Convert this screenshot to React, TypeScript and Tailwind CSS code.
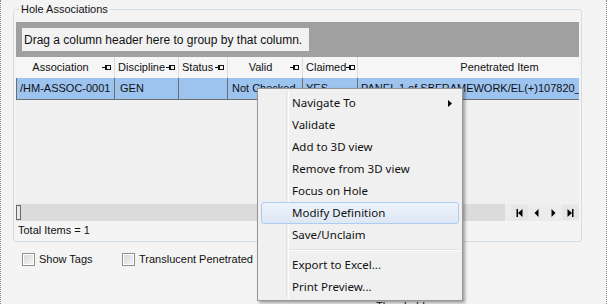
import React from "react";

const grid = "font-['Liberation_Sans',Arial,sans-serif]";
const menuFont = "font-['Noto_Sans','Open_Sans',sans-serif]";

function Pin() {
  return (
    <svg width="9" height="7" viewBox="0 0 9 7" className="shrink-0">
      <path d="M0 3.5h3.5M3.5 1v5" stroke="#111" strokeWidth="1" />
      <rect x="4.5" y="1.5" width="4" height="4" fill="none" stroke="#111" strokeWidth="1" />
    </svg>
  );
}

function NavIcon({ kind }: { kind: "first" | "prev" | "next" | "last" }) {
  return (
    <svg width="7" height="8" viewBox="0 0 7 8">
      {kind === "first" && (
        <>
          <rect x="0.5" y="0" width="1.5" height="8" fill="#000" />
          <path d="M6.5 0v8L2 4z" fill="#000" />
        </>
      )}
      {kind === "prev" && <path d="M5.5 0v8L1.5 4z" fill="#000" />}
      {kind === "next" && <path d="M1.5 0v8l4-4z" fill="#000" />}
      {kind === "last" && (
        <>
          <path d="M0.5 0v8L5 4z" fill="#000" />
          <rect x="5" y="0" width="1.5" height="8" fill="#000" />
        </>
      )}
    </svg>
  );
}

function Checkbox({ label }: { label: string }) {
  return (
    <label className="flex items-center gap-[4px]">
      <span className="h-[13px] w-[13px] border border-[#8e8f8f] bg-white p-[1px]">
        <span className="block h-full w-full bg-gradient-to-br from-[#d8d8d8] to-[#f4f4f4]" />
      </span>
      <span className="text-[11px] leading-[13px] text-[#111]">{label}</span>
    </label>
  );
}

const columns = [
  { title: "Association", w: "w-[99px]", pin: true, center: true, value: "/HM-ASSOC-0001" },
  { title: "Discipline", w: "w-[64px]", pin: true, center: false, value: "GEN" },
  { title: "Status", w: "w-[49px]", pin: true, center: false, value: "" },
  { title: "Valid", w: "w-[75px]", pin: true, center: true, value: "Not Checked" },
  { title: "Claimed", w: "w-[55px]", pin: true, center: false, value: "YES" },
  { title: "Penetrated Item", w: "w-[284px]", pin: false, center: true, value: "PANEL 1 of SBFRAMEWORK/EL(+)107820_PNL" },
];

const menuItems = [
  "Navigate To",
  "Validate",
  "Add to 3D view",
  "Remove from 3D view",
  "Focus on Hole",
  "Modify Definition",
  "Save/Unclaim",
  "-",
  "Export to Excel...",
  "Print Preview...",
];

export default function App() {
  return (
    <div className={`relative h-[304px] w-[607px] overflow-hidden border-x border-dotted border-[#8a8a8a] bg-[#f4f4f4] pl-[12px] pt-[2px] ${grid}`}>
      <fieldset className="w-[569px] rounded-[3px] border border-[#d3dde6] px-[2px] pb-[1px]">
        <legend className="ml-[3px] px-[2px] text-[11px] leading-[14px] text-[#111]">Hole Associations</legend>
        <div className="mt-[6px] w-[563px] overflow-hidden">
          <div className="h-[35px] bg-[#a0a0a0] pl-[6px] pt-[6px]">
            <div className="flex h-[23px] w-[287px] items-center bg-[#f2f2f2] pl-[2px] text-[12px] text-[#111]">
              Drag a column header here to group by that column.
            </div>
          </div>
          <div className="flex h-[21px] w-max bg-[#f6f6f6] text-[11px] text-[#111]">
            {columns.map((c) => (
              <div key={c.title} className={`${c.w} flex shrink-0 items-center border-r border-[#dadada] pr-[3px] pl-[3px]`}>
                <span className={`flex-1 whitespace-nowrap ${c.center ? "text-center" : "text-left"}`}>{c.title}</span>
                {c.pin && <Pin />}
              </div>
            ))}
          </div>
          <div className="flex h-[22px] w-max border-b border-l border-[#6e6e6e] bg-[#9dc3ef] text-[11px] text-[#111]">
            {columns.map((c, i) => (
              <div
                key={c.title}
                className={`${i === 0 ? "w-[98px]" : c.w} flex shrink-0 items-center whitespace-nowrap border-r border-[#6e6e6e] ${i === 3 ? "pl-[4px]" : "pl-[3px]"} ${i === 1 ? "pl-[5px]" : ""}`}
              >
                {c.value}
              </div>
            ))}
          </div>
          <div className="h-[104px] bg-[#f0f0f0]" />
          <div className="flex h-[17px]">
            <div className="flex flex-1 items-center bg-[#dbdbdb]">
              <span className="h-[15px] w-[5px] border border-[#6a6a6a] bg-[#e8e8e8]" />
            </div>
            <div className="flex w-[74px] items-center bg-[#ececec] pl-[6px]">
              <span className="flex h-[15px] w-[17px] items-center justify-center bg-[#e6e6e6]"><NavIcon kind="first" /></span>
              <span className="flex h-[15px] w-[17px] items-center justify-center"><NavIcon kind="prev" /></span>
              <span className="flex h-[15px] w-[17px] items-center justify-center"><NavIcon kind="next" /></span>
              <span className="flex h-[15px] w-[17px] items-center justify-center bg-[#e6e6e6]"><NavIcon kind="last" /></span>
            </div>
          </div>
          <div className="h-[19px] pl-[2px] pt-[3px] text-[11px] leading-[13px] text-[#111]">Total Items = 1</div>
        </div>
      </fieldset>
      <div className="mt-[11px] flex pl-[9px]">
        <div className="w-[100px]"><Checkbox label="Show Tags" /></div>
        <Checkbox label="Translucent Penetrated" />
      </div>
      <div className="mt-[34px] pl-[363px] text-[11px] leading-[13px] text-[#111]">Threshold:</div>

      <div className={`absolute left-[256px] top-[88px] w-[206px] border border-[#979797] bg-[#f0f0f0] px-[3px] pt-[3px] pb-[2px] shadow-[2px_2px_3px_rgba(0,0,0,0.35)] ${menuFont}`}>
        <div className="absolute top-[2px] bottom-[2px] left-[28px] w-[2px] border-l border-[#e2e3e3] shadow-[1px_0_0_#ffffff]" />
        {menuItems.map((item, i) =>
          item === "-" ? (
            <div key={i} className="flex h-[8px] items-center pl-[27px]">
              <div className="h-[2px] w-full border-t border-[#e0e0e0] bg-white" />
            </div>
          ) : (
            <div
              key={item}
              className={`relative flex h-[22px] items-center rounded-[3px] border pl-[30px] text-[11.5px] text-[#111] ${
                item === "Modify Definition"
                  ? "border-[#aeccef] bg-gradient-to-b from-[#eef3fa] to-[#dde7f5]"
                  : "border-transparent"
              }`}
            >
              <span className="flex-1">{item}</span>
              {item === "Navigate To" && (
                <svg width="4" height="7" viewBox="0 0 4 7" className="mr-[6px]">
                  <path d="M0 0v7l4-3.5z" fill="#000" />
                </svg>
              )}
            </div>
          )
        )}
      </div>
    </div>
  );
}
